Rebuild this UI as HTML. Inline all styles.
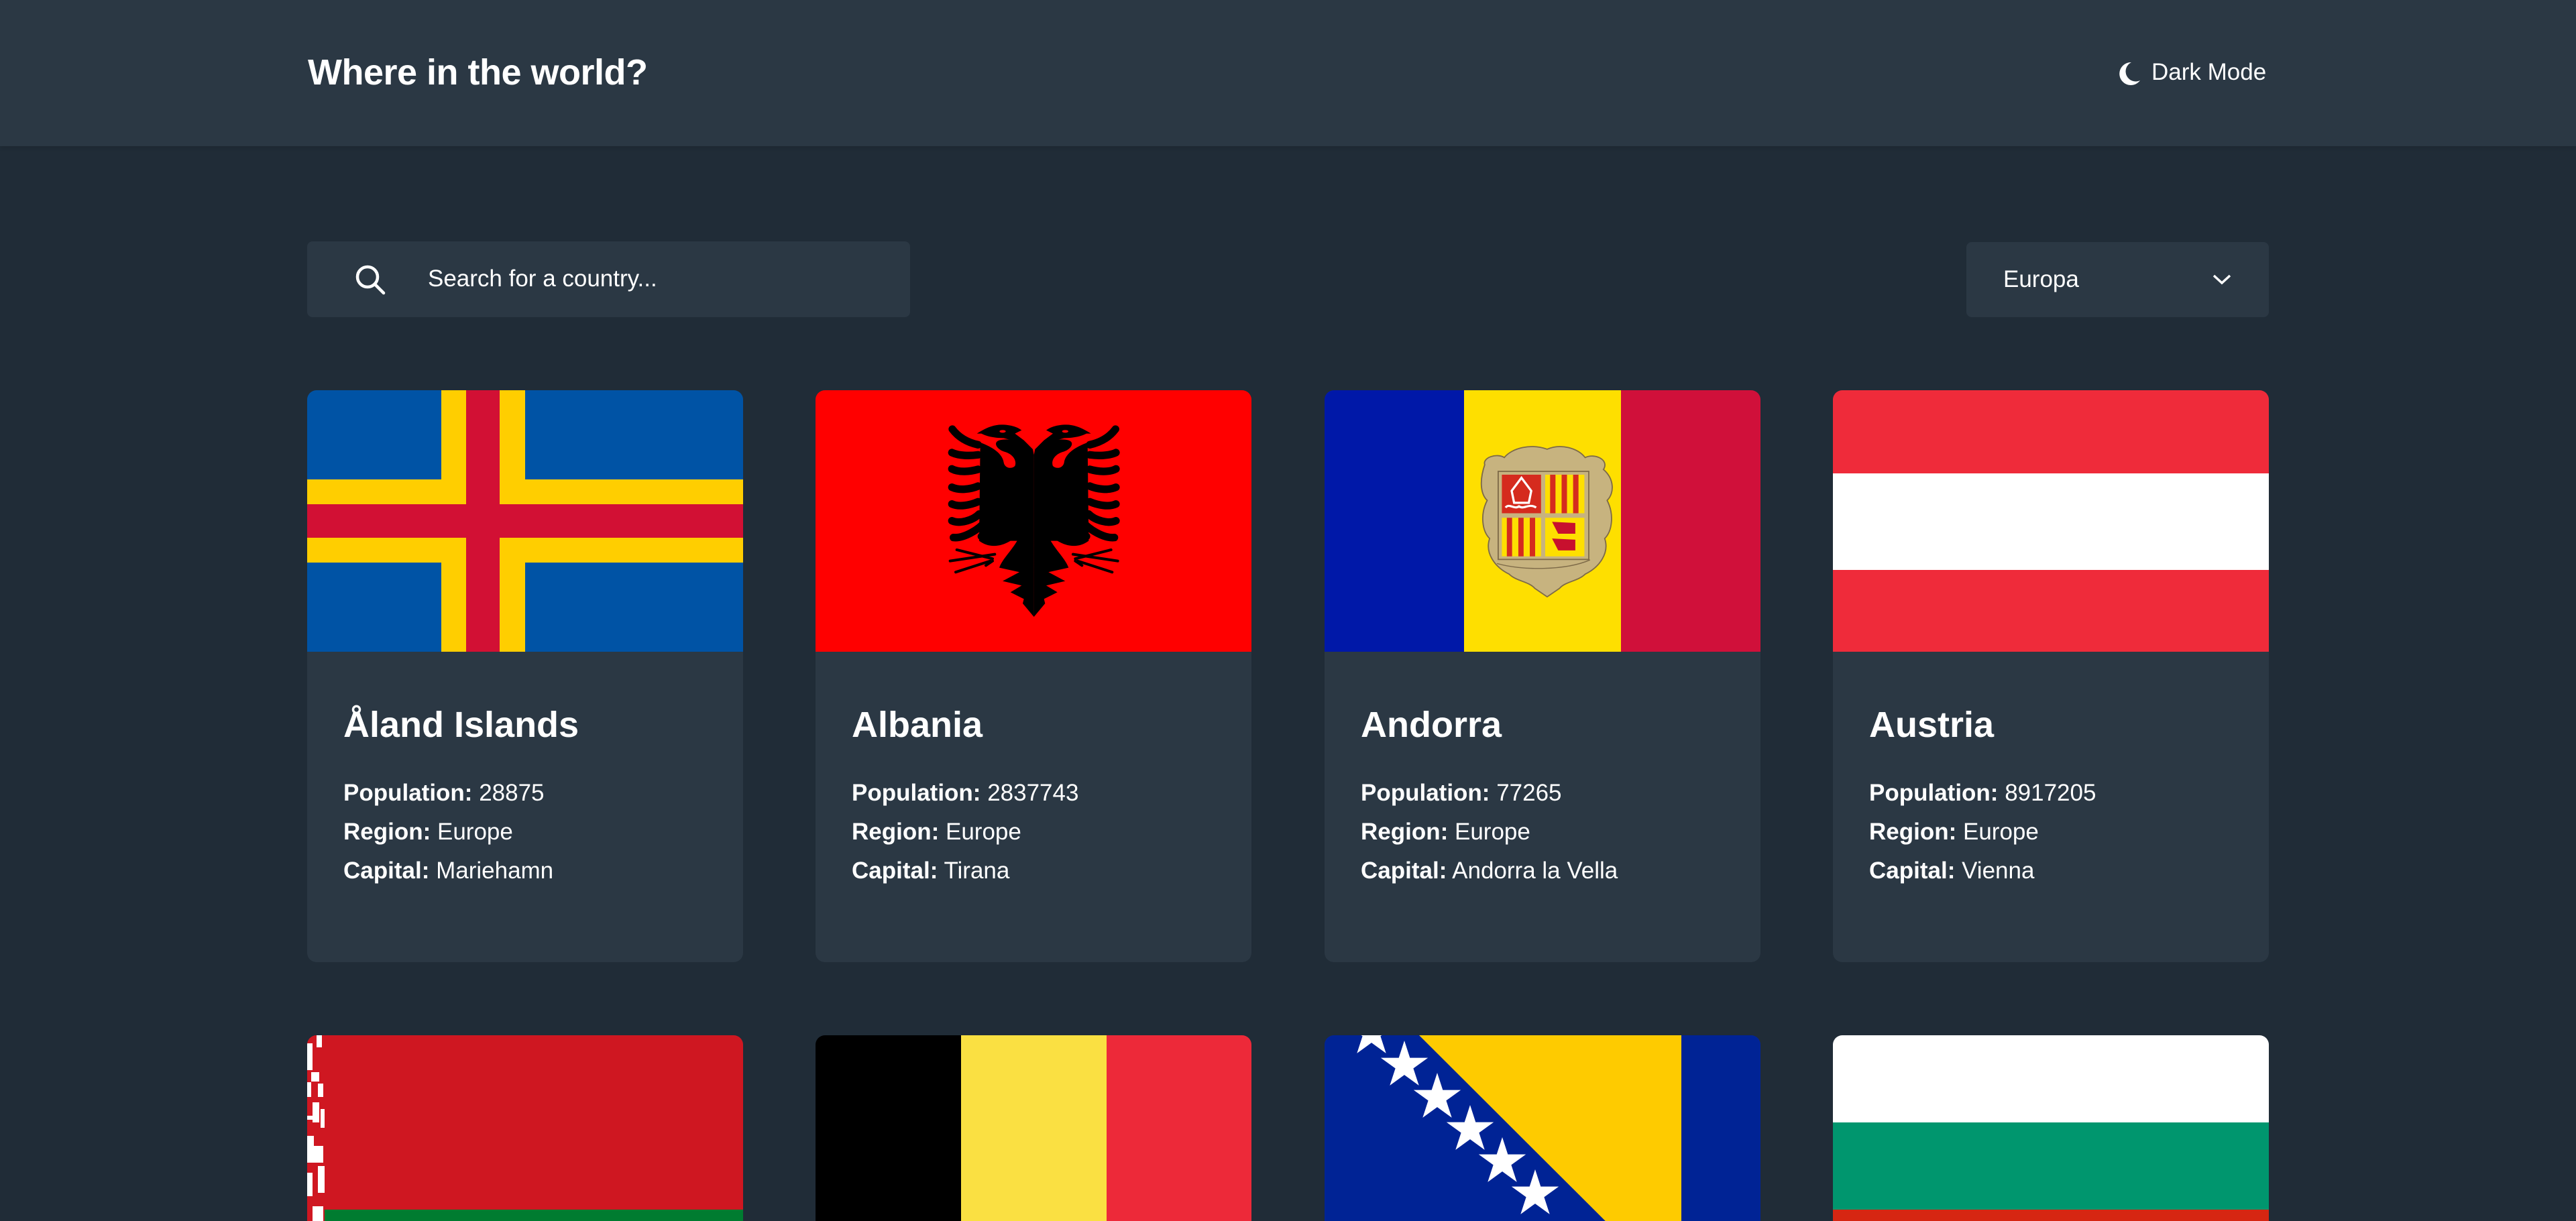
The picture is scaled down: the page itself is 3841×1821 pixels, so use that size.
<!DOCTYPE html>
<html><head><meta charset="utf-8">
<style>
*{margin:0;padding:0;box-sizing:border-box}
html,body{width:3841px;height:1821px;overflow:hidden;background:#202c37;font-family:"Liberation Sans",Arial,sans-serif;color:#fff}
#wrap{position:relative;width:3841px;height:1821px;overflow:hidden;background:#202c37}
.hdr{position:absolute;left:0;top:0;width:3841px;height:218px;background:#2b3844;box-shadow:0 2px 6px rgba(0,0,0,.12)}
.title{position:absolute;left:459px;top:76px;font-size:54px;font-weight:700;line-height:64px;letter-spacing:-0.5px}
.dm{position:absolute;left:3208px;top:86px;font-size:35px;line-height:44px}
.search{position:absolute;left:458px;top:360px;width:899px;height:113px;background:#2b3844;border-radius:8px}
.search span{position:absolute;left:180px;top:34px;font-size:35px;line-height:44px}
.filter{position:absolute;left:2932px;top:361px;width:451px;height:112px;background:#2b3844;border-radius:8px}
.filter span{position:absolute;left:55px;top:34px;font-size:35px;line-height:44px}
.card{position:absolute;width:650px;height:853px;background:#2b3844;border-radius:14px;overflow:hidden}
.card.r2{height:277px;border-radius:14px 14px 0 0}
.card svg.flag{position:absolute;left:0;top:0;width:650px;height:390px}
.card.r2 svg.flag{height:277px}
.name{position:absolute;left:54px;top:467px;font-size:54px;font-weight:700;line-height:64px;white-space:nowrap}
.info{position:absolute;left:54px;top:572px;font-size:35px;line-height:58px;white-space:nowrap}
.info b{font-weight:700}
</style></head><body><div id="wrap">
<div class="hdr">
<div class="title">Where in the world?</div>
<svg style="position:absolute;left:3158px;top:90px" width="36" height="40" viewBox="0 0 36 40"><path d="M20 3 A17 17 0 1 0 33 30 A13 13 0 0 1 20 3 Z" fill="#fff"/></svg>
<div class="dm">Dark Mode</div>
</div>
<div class="search">
<svg style="position:absolute;left:70px;top:35px" width="50" height="50" viewBox="0 0 50 50"><circle cx="20" cy="18" r="15" fill="none" stroke="#fff" stroke-width="4.5"/><line x1="31" y1="29" x2="44" y2="42" stroke="#fff" stroke-width="4.5" stroke-linecap="round"/></svg>
<span>Search for a country...</span>
</div>
<div class="filter"><span>Europa</span>
<svg style="position:absolute;left:365px;top:46px" width="32" height="20" viewBox="0 0 32 20"><polyline points="4,4 16,15 28,4" fill="none" stroke="#fff" stroke-width="3.5"/></svg>
</div>

<div class="card" style="left:458px;top:582px">
<svg class="flag" viewBox="0 0 650 390"><rect width="650" height="390" fill="#0053a5"/><rect x="200" width="125" height="390" fill="#ffce00"/><rect y="133" width="650" height="124" fill="#ffce00"/><rect x="237" width="50" height="390" fill="#d21034"/><rect y="170" width="650" height="50" fill="#d21034"/></svg>
<div class="name">Åland Islands</div>
<div class="info"><b>Population:</b> 28875<br><b>Region:</b> Europe<br><b>Capital:</b> Mariehamn</div>
</div>

<div class="card" style="left:1216px;top:582px">
<svg class="flag" viewBox="0 0 650 390"><rect width="650" height="390" fill="#f00"/>
<g transform="translate(164,38) scale(0.3333)">
<g id="half" fill="#000" stroke="#000" stroke-linecap="round">
<path d="M485,175 L455,130 C420,110 360,100 330,110 C300,120 320,150 350,160 C390,170 410,200 400,225 C385,240 355,235 350,210 C345,170 300,140 245,120 L240,560 C280,590 330,590 380,560 L410,560 C380,610 345,640 330,680 L420,700 L345,740 L430,760 L380,790 L440,820 L435,840 L485,900 Z" stroke="none"/>
<path d="M230,80 C260,60 300,40 340,40 C380,40 410,50 430,65 L400,80 L440,110 L480,150 L485,175 L420,120 L350,100 C300,100 270,90 250,80 Z" stroke="none"/>
<g fill="none" stroke-width="34">
<path d="M120,60 C150,100 190,120 235,130"/>
<path d="M118,165 C150,180 200,180 235,175"/>
<path d="M118,238 C150,255 200,250 235,240"/>
<path d="M118,320 C150,335 200,330 235,315"/>
<path d="M118,395 C150,410 200,400 235,385"/>
<path d="M118,470 C150,485 210,470 240,440"/>
<path d="M125,545 C170,550 240,510 270,470"/>
<path d="M250,540 C285,530 310,500 310,470"/>
<path d="M320,520 C345,505 370,490 375,480"/>
</g>
<g fill="none" stroke-width="12">
<path d="M310,620 L110,650"/><path d="M300,640 L140,600"/><path d="M290,650 L135,700"/>
<path d="M300,650 L270,670"/>
</g>
</g>
<use href="#half" transform="translate(970,0) scale(-1,1)"/>
<ellipse cx="345" cy="70" rx="14" ry="6" fill="#f00"/><ellipse cx="625" cy="70" rx="14" ry="6" fill="#f00"/>
</g></svg>
<div class="name">Albania</div>
<div class="info"><b>Population:</b> 2837743<br><b>Region:</b> Europe<br><b>Capital:</b> Tirana</div>
</div>

<div class="card" style="left:1975px;top:582px">
<svg class="flag" viewBox="0 0 650 390"><rect width="208" height="390" fill="#0018a8"/><rect x="208" width="234" height="390" fill="#fedf00"/><rect x="442" width="208" height="390" fill="#d0103a"/>
<g transform="translate(206,72) scale(0.365 0.355)">
<path d="M90,110 C80,80 140,60 170,80 C200,40 280,20 345,45 C400,20 470,40 500,80 C540,60 600,90 575,130 C620,170 620,230 590,260 C620,320 610,390 580,420 C600,480 560,540 500,570 C470,600 420,600 395,630 L345,665 L295,630 C270,600 220,600 190,570 C130,540 90,480 110,420 C80,390 70,320 100,260 C70,230 70,170 90,110 Z" fill="#c7b37f" stroke="#7d6a48" stroke-width="5"/>
<rect x="145" y="138" width="370" height="370" fill="#c7b37f" stroke="#7d6a48" stroke-width="5"/>
<rect x="160" y="152" width="160" height="162" fill="#d52b1e"/>
<rect x="337" y="152" width="160" height="162" fill="#fedf00"/>
<g fill="#d52b1e"><rect x="357" y="152" width="22" height="162"/><rect x="404" y="152" width="22" height="162"/><rect x="451" y="152" width="22" height="162"/>
<rect x="180" y="333" width="22" height="162"/><rect x="227" y="333" width="22" height="162"/><rect x="274" y="333" width="22" height="162"/></g>
<rect x="160" y="333" width="20" height="162" fill="#fedf00"/><rect x="202" y="333" width="25" height="162" fill="#fedf00"/><rect x="249" y="333" width="25" height="162" fill="#fedf00"/><rect x="296" y="333" width="24" height="162" fill="#fedf00"/>
<rect x="337" y="333" width="160" height="162" fill="#fedf00"/>
<path d="M200,220 L240,165 L280,220 L270,270 L210,270 Z" fill="none" stroke="#fff" stroke-width="9"/>
<path d="M175,290 C190,270 210,300 230,285 C250,300 270,270 300,290" fill="none" stroke="#fff" stroke-width="9"/>
<path d="M365,350 L460,355 L460,400 L390,400 Z" fill="#c8102e"/><path d="M365,420 L460,425 L460,470 L390,470 Z" fill="#c8102e"/>
<path d="M140,525 C240,555 420,555 520,510" fill="none" stroke="#7d6a48" stroke-width="4"/>
</g></svg>
<div class="name">Andorra</div>
<div class="info"><b>Population:</b> 77265<br><b>Region:</b> Europe<br><b>Capital:</b> Andorra la Vella</div>
</div>

<div class="card" style="left:2733px;top:582px">
<svg class="flag" viewBox="0 0 650 390"><rect width="650" height="390" fill="#ef2b3a"/><rect y="124" width="650" height="144" fill="#fff"/></svg>
<div class="name">Austria</div>
<div class="info"><b>Population:</b> 8917205<br><b>Region:</b> Europe<br><b>Capital:</b> Vienna</div>
</div>

<div class="card r2" style="left:458px;top:1544px">
<svg class="flag" viewBox="0 0 650 277"><rect width="650" height="277" fill="#cf1721"/><rect x="26" y="260" width="624" height="17" fill="#007c30"/>
<rect width="26" height="277" fill="#cf1721"/>
<g fill="#fff">
<rect x="0" y="12" width="8" height="40"/><rect x="14" y="0" width="8" height="18"/><rect x="6" y="55" width="12" height="14"/><rect x="0" y="70" width="6" height="22"/><rect x="16" y="72" width="8" height="20"/><rect x="8" y="100" width="10" height="30"/><rect x="0" y="120" width="8" height="6"/><rect x="20" y="110" width="6" height="28"/>
<rect x="0" y="150" width="10" height="40"/><rect x="10" y="165" width="14" height="25"/><rect x="16" y="195" width="10" height="40"/><rect x="0" y="205" width="8" height="35"/><rect x="8" y="255" width="16" height="22"/>
</g></svg>
</div>
<div class="card r2" style="left:1216px;top:1544px">
<svg class="flag" viewBox="0 0 650 277"><rect width="217" height="277" fill="#000"/><rect x="217" width="217" height="277" fill="#fae042"/><rect x="434" width="216" height="277" fill="#ed2939"/></svg>
</div>
<div class="card r2" style="left:1975px;top:1544px">
<svg class="flag" viewBox="0 0 650 277"><rect width="650" height="277" fill="#002395"/><polygon points="141,0 532,0 532,390" fill="#fecb00"/>
<defs><polygon id="st" points="0,-37 8.3,-11.4 35.2,-11.4 13.4,4.4 21.7,29.9 0,14.1 -21.7,29.9 -13.4,4.4 -35.2,-11.4 -8.3,-11.4" fill="#fff"/></defs>
<use href="#st" x="70" y="-3"/><use href="#st" x="119" y="45"/><use href="#st" x="168" y="93"/><use href="#st" x="217" y="141"/><use href="#st" x="265" y="189"/><use href="#st" x="314" y="237"/>
</svg>
</div>
<div class="card r2" style="left:2733px;top:1544px">
<svg class="flag" viewBox="0 0 650 277"><rect width="650" height="277" fill="#fff"/><rect y="130" width="650" height="130" fill="#00966e"/><rect y="260" width="650" height="17" fill="#d62612"/></svg>
</div>
</div></body></html>
